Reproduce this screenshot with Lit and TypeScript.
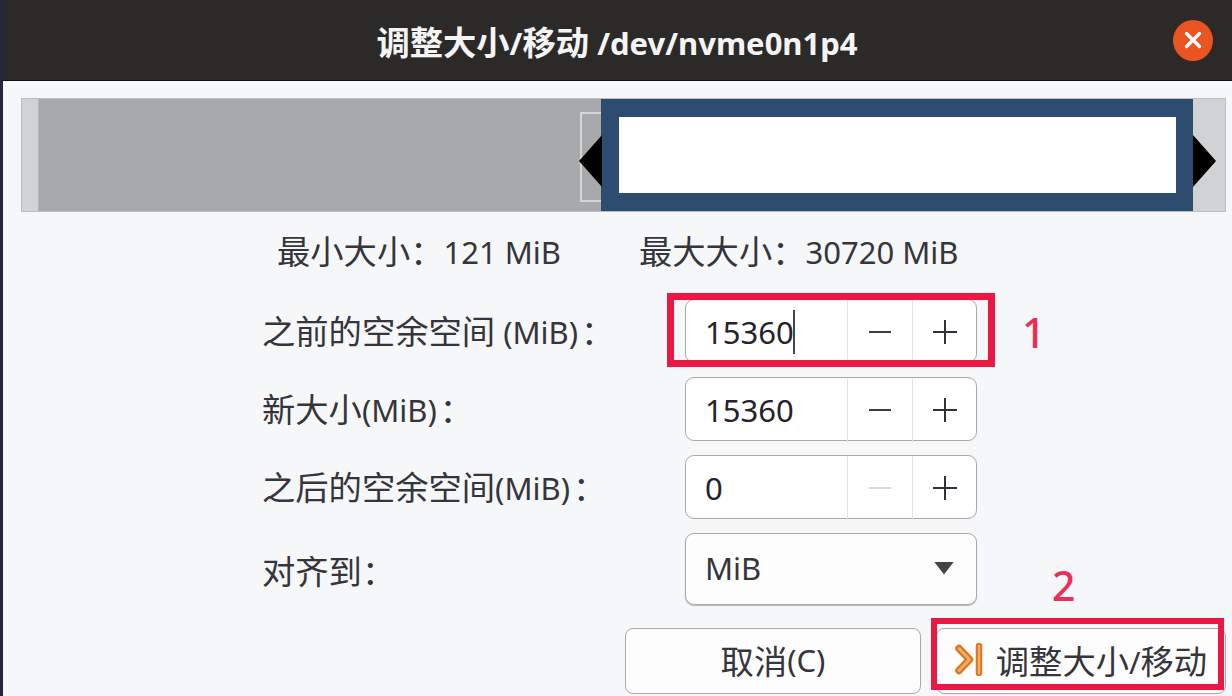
import { LitElement, html, css } from "lit";
import { customElement } from "lit/decorators.js";

/* CJK runs sit slightly larger than the Latin runs in the reference. */
const t = (text: string) =>
  text.split(/([\u4e00-\u9fff：]+)/).map((part, i) => (i % 2 ? html`<span class="cjk">${part}</span>` : part));

const spin = (value: string, cursor = false, minusOff = false) => html`
  <div class="spin">
    <div class="val">${value}${cursor ? html`<span class="caret"></span>` : ""}</div>
    <div class="sb"><svg width="24" height="24" viewBox="0 0 24 24"><path d="M1 12H23" stroke=${minusOff ? "#d9dadc" : "#3c3c42"} stroke-width="2"/></svg></div>
    <div class="sb"><svg width="26" height="26" viewBox="0 0 26 26"><path d="M1 13H25M13 1V25" stroke="#33303a" stroke-width="2"/></svg></div>
  </div>`;

@customElement("app-root")
export class AppRoot extends LitElement {
  static styles = css`
    :host {
      display: block; position: relative; width: 1232px; height: 696px; overflow: hidden;
      background: #f6f7f9; color: #35353b;
      font-family: "Noto Sans", "Noto Sans CJK SC", sans-serif; font-size: 31px;
      box-sizing: border-box; border-left: 3px solid #23283a;
    }
    .cjk { font-size: 33.3px; }
    .patch { position: absolute; left: -3px; top: 283px; width: 3px; height: 65px; background: #4a1a1c; }
    .title {
      display: grid; grid-template-columns: 1fr auto 1fr; align-items: center;
      height: 81px; margin-left: -3px; background: #2c2a29; border-bottom: 1px solid #111; box-sizing: border-box;
      color: #f4f4f4; font-weight: 700;
    }
    .title .text { grid-column: 2; padding-left: 2px; }
    .close {
      grid-column: 3; justify-self: end; margin-right: 19px; width: 40px; height: 41px; border-radius: 50%;
      background: #e95420; display: flex; align-items: center; justify-content: center;
    }
    .map {
      position: relative; display: flex; height: 114px; width: 1205px; margin: 17px 0 0 18px;
      box-sizing: border-box; border: 1px solid #bcbdc0; background: #a8a9ab;
    }
    .cap { background: #d1d2d4; }
    .cap.l { width: 16px; border-right: 1px solid #b5b6b8; }
    .free { flex: 1; }
    .cap.r { width: 32px; }
    .part {
      width: 592px; box-sizing: border-box; background: #2e4b70;
      padding: 18px 17px 18px 18px; display: flex;
    }
    .part div { flex: 1; background: #fff; border-left: 2px solid #fbfbe6; }
    .ghost {
      position: absolute; left: 558px; top: 13px; width: 21px; height: 90px; box-sizing: border-box;
      border: 2px solid #d4d5d7; border-right: 0;
    }
    .arrow { position: absolute; top: 36px; width: 23px; height: 52px; background: #000; }
    .arrow.a { left: 557px; clip-path: polygon(100% 0, 0 50%, 100% 100%); }
    .arrow.b { left: 1171px; clip-path: polygon(0 0, 100% 50%, 0 100%); }
    .info { display: flex; height: 87px; align-items: flex-start; padding-left: 274px; padding-top: 16px; box-sizing: border-box; }
    .info div { line-height: 46px; white-space: pre; }
    .info div + div { margin-left: 78px; }
    .form {
      display: grid; grid-template-columns: 423px 292px; grid-template-rows: 64px 64px 64px 72px; row-gap: 14px;
      margin-left: 259px; align-items: center;
    }
    .form label { white-space: nowrap; padding-bottom: 4px; }
    .form label.plain { padding-bottom: 0; }
    .colon { margin-left: 3px; }
    .spin {
      display: grid; grid-template-columns: 161px 65px 1fr; height: 64px; box-sizing: border-box;
      border: 1px solid #a9a9ad; border-radius: 9px; background: #fff;
    }
    .val { padding-left: 19px; line-height: 64px; color: #24232b; display: flex; align-items: center; }
    .caret { width: 2px; height: 44px; background: #444; margin-left: -1px; }
    .sb { border-left: 1px solid #e2e2e4; display: flex; align-items: center; justify-content: center; }
    .select {
      height: 72px; box-sizing: border-box; border: 1px solid #a9a9ad; border-radius: 9px;
      background: #fdfdfd; display: flex; align-items: center; justify-content: space-between; padding: 0 22px 2px 19px;
      box-shadow: 0 1px 1px #bbb;
    }
    .tri { width: 20px; height: 13px; background: #444; clip-path: polygon(0 0, 100% 0, 50% 100%); }
    .buttons { display: flex; margin: 23px 0 0 622px; gap: 15px; }
    button {
      font: inherit; color: #35353b; height: 66px; box-sizing: border-box; padding: 0 0 3px;
      border: 1px solid #a9a9ad; border-radius: 8px; background: #fdfdfd;
      display: flex; align-items: center; justify-content: center;
    }
    .cancel { width: 296px; }
    .apply { width: 290px; gap: 13px; white-space: nowrap; }
    .mark { position: absolute; border: 7px solid #ec1844; box-sizing: border-box; }
    .m1 { left: 664px; top: 293px; width: 328px; height: 74px; }
    .m2 { left: 928px; top: 618px; width: 293px; height: 72px; border-width: 6px; }
    .num { position: absolute; color: #ee2c55; font-size: 41px; line-height: 44px; font-weight: 500; }
    .n1 { left: 1019px; top: 310px; }
    .n2 { left: 1049px; top: 563px; }
  `;

  render() {
    return html`
      <div class="patch"></div>
      <div class="title">
        <span class="text">${t("调整大小/移动 /dev/nvme0n1p4")}</span>
        <div class="close"><svg width="18" height="18" viewBox="0 0 18 18"><path d="M2.5 2.5L15.5 15.5M15.5 2.5L2.5 15.5" stroke="#fff" stroke-width="3.4" stroke-linecap="round"/></svg></div>
      </div>
      <div class="map">
        <div class="cap l"></div><div class="free"></div>
        <div class="part"><div></div></div>
        <div class="cap r"></div>
        <div class="ghost"></div><div class="arrow a"></div><div class="arrow b"></div>
      </div>
      <div class="info"><div>${t("最小大小：121 MiB")}</div><div>${t("最大大小：30720 MiB")}</div></div>
      <div class="form">
        <label>${t("之前的空余空间 (MiB)")}<span class="cjk colon">：</span></label>${spin("15360", true)}
        <label>${t("新大小(MiB)")}<span class="cjk colon">：</span></label>${spin("15360")}
        <label>${t("之后的空余空间(MiB)")}<span class="cjk colon">：</span></label>${spin("0", false, true)}
        <label class="plain">${t("对齐到：")}</label>
        <div class="select"><span>MiB</span><span class="tri"></span></div>
      </div>
      <div class="buttons">
        <button class="cancel">${t("取消(C)")}</button>
        <button class="apply">
          <svg width="28" height="33" viewBox="0 0 28 33">
            <path d="M4 5.5L14.5 16.5L4 27.5" fill="none" stroke="#d9761f" stroke-width="7.5" stroke-linecap="round" stroke-linejoin="round"/>
            <path d="M4 5.5L14.5 16.5L4 27.5" fill="none" stroke="#f5ab63" stroke-width="3" stroke-linecap="round" stroke-linejoin="round"/>
            <path d="M24 3V30" stroke="#d9761f" stroke-width="6.5" stroke-linecap="round"/>
            <path d="M24 3V30" stroke="#f5ab63" stroke-width="2.5" stroke-linecap="round"/>
          </svg>
          <span>${t("调整大小/移动")}</span>
        </button>
      </div>
      <div class="mark m1"></div><div class="mark m2"></div>
      <div class="num n1">1</div><div class="num n2">2</div>
    `;
  }
}
